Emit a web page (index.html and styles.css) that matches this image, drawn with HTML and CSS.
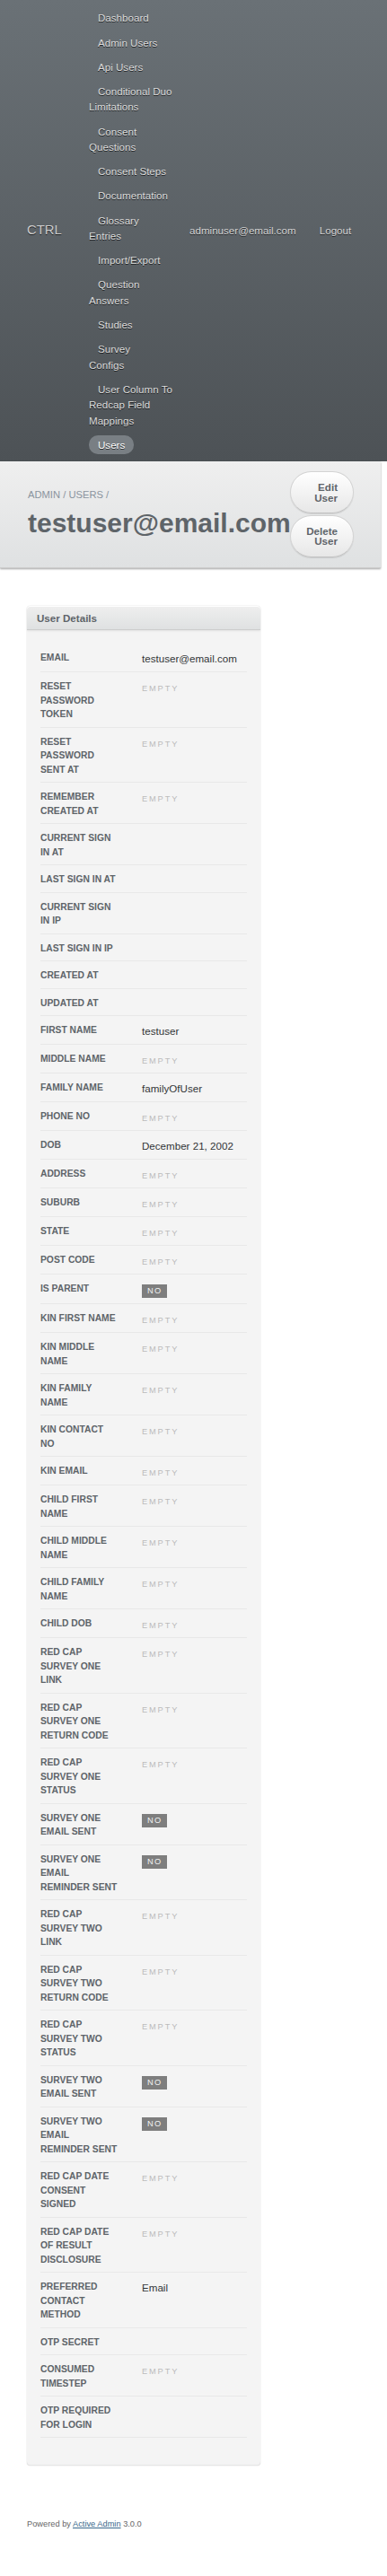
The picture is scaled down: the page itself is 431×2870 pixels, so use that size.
FILE: index.html
```html
<!DOCTYPE html>
<html lang="en">
<head>
<meta charset="utf-8">
<title>testuser@email.com | CTRL</title>
<link rel="stylesheet" href="styles.css">
</head>
<body>
<header class="header">
  <h1 class="site-title">CTRL</h1>
  <ul class="tabs">
    <li><a href="#">Dashboard</a></li>
    <li><a href="#">Admin Users</a></li>
    <li><a href="#">Api Users</a></li>
    <li><a href="#">Conditional Duo<br>Limitations</a></li>
    <li><a href="#">Consent<br>Questions</a></li>
    <li><a href="#">Consent Steps</a></li>
    <li><a href="#">Documentation</a></li>
    <li><a href="#">Glossary<br>Entries</a></li>
    <li><a href="#">Import/Export</a></li>
    <li><a href="#">Question<br>Answers</a></li>
    <li><a href="#">Studies</a></li>
    <li><a href="#">Survey<br>Configs</a></li>
    <li><a href="#">User Column To<br>Redcap Field<br>Mappings</a></li>
    <li class="current"><a href="#">Users</a></li>
  </ul>
  <ul class="utility-nav">
    <li><a href="#">adminuser@email.com</a></li>
    <li><a href="#">Logout</a></li>
  </ul>
</header>

<div class="title-bar">
  <div class="title-left">
    <div class="breadcrumb"><a href="#">ADMIN</a> <span class="sep">/</span> <a href="#">USERS</a> <span class="sep">/</span></div>
    <h2 class="page-title">testuser@email.com</h2>
  </div>
  <div class="action-items">
    <a class="button" href="#">Edit User</a>
    <a class="button" href="#">Delete User</a>
  </div>
</div>

<main class="content">
  <div class="panel">
    <h3 class="panel-title">User Details</h3>
    <div class="panel-contents">
      <table class="attributes">
        <colgroup><col class="col-label"><col></colgroup>
        <tbody>
          <tr><th>EMAIL</th><td>testuser@email.com</td></tr>
          <tr><th>RESET PASSWORD TOKEN</th><td><span class="empty">Empty</span></td></tr>
          <tr><th>RESET PASSWORD SENT AT</th><td><span class="empty">Empty</span></td></tr>
          <tr><th>REMEMBER CREATED AT</th><td><span class="empty">Empty</span></td></tr>
          <tr><th>CURRENT SIGN IN AT</th><td></td></tr>
          <tr><th>LAST SIGN IN AT</th><td></td></tr>
          <tr><th>CURRENT SIGN IN IP</th><td></td></tr>
          <tr><th>LAST SIGN IN IP</th><td></td></tr>
          <tr><th>CREATED AT</th><td></td></tr>
          <tr><th>UPDATED AT</th><td></td></tr>
          <tr><th>FIRST NAME</th><td>testuser</td></tr>
          <tr><th>MIDDLE NAME</th><td><span class="empty">Empty</span></td></tr>
          <tr><th>FAMILY NAME</th><td>familyOfUser</td></tr>
          <tr><th>PHONE NO</th><td><span class="empty">Empty</span></td></tr>
          <tr><th>DOB</th><td>December 21, 2002</td></tr>
          <tr><th>ADDRESS</th><td><span class="empty">Empty</span></td></tr>
          <tr><th>SUBURB</th><td><span class="empty">Empty</span></td></tr>
          <tr><th>STATE</th><td><span class="empty">Empty</span></td></tr>
          <tr><th>POST CODE</th><td><span class="empty">Empty</span></td></tr>
          <tr><th>IS PARENT</th><td><span class="status-tag">No</span></td></tr>
          <tr><th>KIN FIRST NAME</th><td><span class="empty">Empty</span></td></tr>
          <tr><th>KIN MIDDLE NAME</th><td><span class="empty">Empty</span></td></tr>
          <tr><th>KIN FAMILY NAME</th><td><span class="empty">Empty</span></td></tr>
          <tr><th>KIN CONTACT NO</th><td><span class="empty">Empty</span></td></tr>
          <tr><th>KIN EMAIL</th><td><span class="empty">Empty</span></td></tr>
          <tr><th>CHILD FIRST NAME</th><td><span class="empty">Empty</span></td></tr>
          <tr><th>CHILD MIDDLE NAME</th><td><span class="empty">Empty</span></td></tr>
          <tr><th>CHILD FAMILY NAME</th><td><span class="empty">Empty</span></td></tr>
          <tr><th>CHILD DOB</th><td><span class="empty">Empty</span></td></tr>
          <tr><th>RED CAP SURVEY ONE LINK</th><td><span class="empty">Empty</span></td></tr>
          <tr><th>RED CAP SURVEY ONE RETURN CODE</th><td><span class="empty">Empty</span></td></tr>
          <tr><th>RED CAP SURVEY ONE STATUS</th><td><span class="empty">Empty</span></td></tr>
          <tr><th>SURVEY ONE EMAIL SENT</th><td><span class="status-tag">No</span></td></tr>
          <tr><th>SURVEY ONE EMAIL REMINDER SENT</th><td><span class="status-tag">No</span></td></tr>
          <tr><th>RED CAP SURVEY TWO LINK</th><td><span class="empty">Empty</span></td></tr>
          <tr><th>RED CAP SURVEY TWO RETURN CODE</th><td><span class="empty">Empty</span></td></tr>
          <tr><th>RED CAP SURVEY TWO STATUS</th><td><span class="empty">Empty</span></td></tr>
          <tr><th>SURVEY TWO EMAIL SENT</th><td><span class="status-tag">No</span></td></tr>
          <tr><th>SURVEY TWO EMAIL REMINDER SENT</th><td><span class="status-tag">No</span></td></tr>
          <tr><th>RED CAP DATE CONSENT SIGNED</th><td><span class="empty">Empty</span></td></tr>
          <tr><th>RED CAP DATE OF RESULT DISCLOSURE</th><td><span class="empty">Empty</span></td></tr>
          <tr><th>PREFERRED CONTACT METHOD</th><td>Email</td></tr>
          <tr><th>OTP SECRET</th><td></td></tr>
          <tr><th>CONSUMED TIMESTEP</th><td><span class="empty">Empty</span></td></tr>
          <tr><th>OTP REQUIRED FOR LOGIN</th><td></td></tr>
        </tbody>
      </table>
    </div>
  </div>
</main>

<footer class="footer">
  <p>Powered by <a href="#">Active Admin</a> 3.0.0</p>
</footer>
</body>
</html>
```

FILE: styles.css
```css
* {
  box-sizing: border-box;
}

html, body {
  margin: 0;
  padding: 0;
}

body {
  background: #ffffff;
  font-family: "Liberation Sans", Arial, Helvetica, sans-serif;
  font-size: 11.6px;
  line-height: 1.5;
  color: #323537;
}

a {
  text-decoration: none;
}

/* ---------- Header ---------- */
.header {
  display: flex;
  align-items: center;
  width: 100%;
  background: linear-gradient(180deg, #6a7176 0%, #4d5256 100%);
  text-shadow: rgba(0, 0, 0, 0.7) 0 1px 0;
}

.site-title {
  flex: 0 0 99px;
  margin: 0;
  padding-left: 30px;
  font-size: 14.8px;
  font-weight: normal;
  line-height: 1;
  color: #cdcdcd;
  white-space: nowrap;
}

.tabs {
  flex: 0 0 102px;
  list-style: none;
  margin: 0;
  padding: 11.3px 0 9.6px 0;
}

.tabs li {
  display: block;
  white-space: nowrap;
  line-height: 17.4px;
  margin-bottom: 9.8px;
}

.tabs li:last-child {
  margin-bottom: 0;
}

.tabs a {
  color: #dcdcdc;
  padding: 4px 10px;
  border-radius: 10px;
}

.tabs li.current a {
  background: #797f84;
  color: #ffffff;
}

.utility-nav {
  display: flex;
  gap: 26px;
  list-style: none;
  margin: 0 0 0 10px;
  padding: 0;
  white-space: nowrap;
  line-height: 17.4px;
}

.utility-nav a {
  color: #d6d6d6;
}

/* ---------- Title bar ---------- */
.title-bar {
  display: flex;
  align-items: center;
  width: 424px;
  padding: 11.5px 30px 11.5px 31px;
  background: linear-gradient(180deg, #efefef 0%, #dfe1e2 100%);
  border-bottom: 1px solid #cdcdcd;
  box-shadow: 0 1px 2px rgba(0, 0, 0, 0.37);
}

.title-left {
  flex: 1 1 auto;
  min-width: 0;
}

.breadcrumb {
  font-size: 11.2px;
  line-height: 13px;
  color: #8a949e;
  margin-bottom: 7px;
  white-space: nowrap;
}

.breadcrumb a {
  color: #8a949e;
}

.page-title {
  margin: 0;
  font-size: 30px;
  line-height: 36px;
  font-weight: bold;
  color: #5e6469;
  white-space: nowrap;
}

.action-items {
  flex: 0 0 71px;
  display: flex;
  flex-direction: column;
  gap: 1.3px;
}

.button {
  display: block;
  padding: 11px 17px;
  text-align: right;
  font-size: 11.6px;
  line-height: 11.5px;
  font-weight: bold;
  color: #5e6469;
  background: linear-gradient(180deg, #ffffff 0%, #e7e7e7 100%);
  border: 1px solid #d3d3d3;
  border-bottom-color: #c3c3c3;
  border-radius: 200px;
  box-shadow: 0 1px 1px rgba(0, 0, 0, 0.10), inset 0 1px 0 #ffffff;
}

/* ---------- Content ---------- */
.content {
  padding: 41.6px 30px 29px 30px;
}

.panel {
  width: 260px;
  background: #f4f4f4;
  border-radius: 4px;
  box-shadow: inset 0 1px 0 #ffffff, inset 0 -1px 0 #e6e6e6, 0 0 1px rgba(0, 0, 0, 0.35);
}

.panel-title {
  margin: 0;
  padding: 5px 10px 4px 11px;
  font-size: 11.6px;
  line-height: 17.4px;
  font-weight: bold;
  color: #5e6469;
  background: linear-gradient(180deg, #efefef 0%, #dfe1e2 100%);
  border-bottom: 1px solid #cdcdcd;
  border-radius: 4px 4px 0 0;
  box-shadow: inset 0 1px 0 #ffffff, 0 1px 2px rgba(0, 0, 0, 0.08);
}

.panel-contents {
  padding: 15px 15px 31px 15px;
}

.attributes {
  width: 230px;
  table-layout: fixed;
  border-collapse: collapse;
}

.col-label {
  width: 113px;
}

.attributes th,
.attributes td {
  vertical-align: top;
  text-align: left;
  padding: 8px 0 6px 0;
  border-bottom: 1px solid #e8e8e8;
}

.attributes th {
  padding-right: 25px;
  font-size: 10.3px;
  line-height: 15.5px;
  font-weight: bold;
  color: #5e6469;
}

.attributes td {
  font-size: 11.6px;
  line-height: 17px;
  color: #323537;
}

.empty {
  font-size: 9.28px;
  line-height: 1;
  letter-spacing: 0.2em;
  text-transform: uppercase;
  color: #bbbbbb;
}

.status-tag {
  display: inline-block;
  vertical-align: baseline;
  padding: 2px 5px 2px 6px;
  font-size: 9.28px;
  line-height: 11px;
  letter-spacing: 0.15em;
  text-transform: uppercase;
  color: #f2f2f2;
  background: #7e7e7e;
}

/* ---------- Footer ---------- */
.footer {
  padding: 30px 30px 30px 30px;
  font-size: 9.28px;
  line-height: 13.9px;
  color: #666666;
}

.footer p {
  margin: 0;
}

.footer a {
  color: #38678b;
  text-decoration: underline;
}
```
